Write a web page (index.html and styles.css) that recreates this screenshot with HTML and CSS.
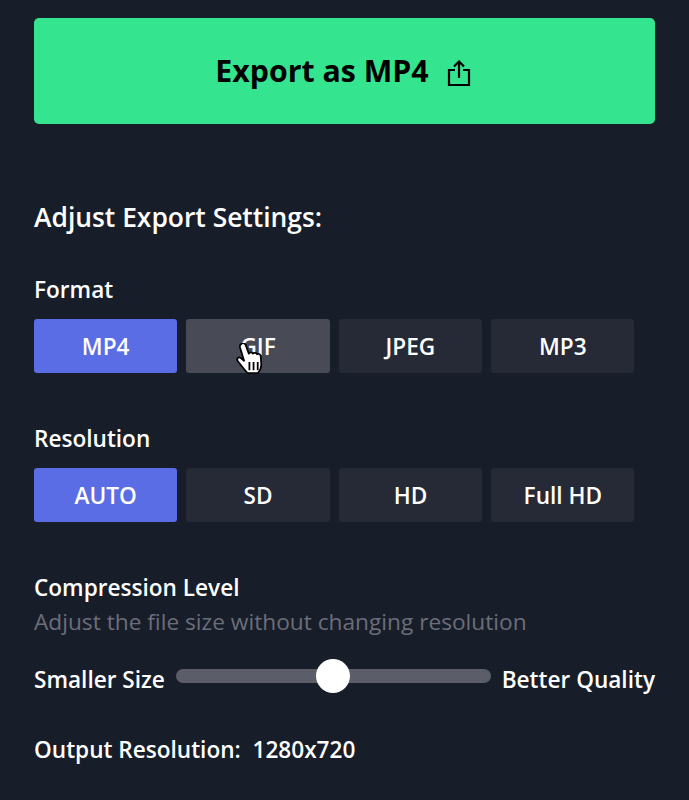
FILE: index.html
```html
<!DOCTYPE html>
<html lang="en">
<head>
    <meta charset="UTF-8">
    <title>Export Settings</title>
    <link rel="stylesheet" href="styles.css">
</head>
<body>
    <div class="panel">
        <button class="export-button">
            <span>Export as MP4</span>
            <svg class="share-icon" width="24" height="28" viewBox="0 0 24 28" fill="none" stroke="#000" stroke-width="2.200">
                <path d="M8 11H2v15h20V11h-6"/>
                <path d="M12 19V3"/>
                <path d="M7 7.500L12 2.500l5 5"/>
            </svg>
        </button>

        <h2 class="settings-title">Adjust Export Settings:</h2>

        <div class="group-label">Format</div>
        <div class="options">
            <div class="option active">MP4</div>
            <div class="option hovered">GIF
                <svg class="cursor" width="28" height="32" viewBox="2 2 22 27">
                    <path d="M6 2.500c1.500-1 3 0 3.500 1.500l2.500 7c.5-1.500 3-1.500 3.500 0 .5-1 3-1 3.500.5.800-.8 2.800-.3 3 1.500l.5 6c.2 4-1.500 7-3 8.500H11c-2-2-5-6-8.500-10.500-1-1.500.5-3.500 2.500-2.500l3 2.500L4.500 5.500C4.200 4.200 5 3 6 2.500z" fill="#fff" stroke="#000" stroke-width="1.500" stroke-linejoin="round"/>
                    <path d="M12.500 18v7M16 18v7M19.500 18v7" stroke="#000" stroke-width="1.500"/>
                </svg>
            </div>
            <div class="option">JPEG</div>
            <div class="option">MP3</div>
        </div>

        <div class="group-label">Resolution</div>
        <div class="options">
            <div class="option active">AUTO</div>
            <div class="option">SD</div>
            <div class="option">HD</div>
            <div class="option">Full HD</div>
        </div>

        <div class="group-label">Compression Level</div>
        <p class="hint">Adjust the file size without changing resolution</p>
        <div class="slider-row">
            <span>Smaller Size</span>
            <div class="slider">
                <div class="slider-thumb"></div>
            </div>
            <span>Better Quality</span>
        </div>

        <div class="output">Output Resolution:&nbsp; 1280x720</div>
    </div>
</body>
</html>
```

FILE: styles.css
```css
html, body {
    height: 100%;
}
body {
    font-family: 'Open Sans', sans-serif;
    background-color: #181d2a;
    color: #ffffff;
    margin: 0;
    overflow: hidden;
}
.panel {
    padding: 18px 34px 0;
}
.export-button {
    display: flex;
    align-items: center;
    justify-content: center;
    gap: 18px;
    width: 100%;
    height: 106px;
    background-color: #34e48e;
    color: #000000;
    font-family: inherit;
    font-size: 30.300px;
    font-weight: 700;
    border: none;
    border-radius: 5px;
    padding: 0 3px 2px 0;
}
.share-icon {
    margin-top: 6px;
}
.settings-title {
    font-size: 26.400px;
    font-weight: 600;
    line-height: 32px;
    margin: 77px 0 0;
}
.group-label {
    font-size: 22.600px;
    font-weight: 600;
    line-height: 30px;
    margin-top: 42px;
}
.options {
    display: flex;
    gap: 9.100px;
    margin-top: 14px;
    margin-bottom: 51px;
}
.options + .group-label {
    margin-top: 0;
}
.option {
    position: relative;
    display: flex;
    align-items: center;
    justify-content: center;
    width: 143.300px;
    height: 54px;
    background-color: #262a37;
    border-radius: 3px;
    font-size: 22.600px;
    font-weight: 600;
}
.option.active {
    background-color: #5a6de4;
}
.option.hovered {
    background-color: #484b55;
}
.cursor {
    position: absolute;
    left: 50px;
    top: 24px;
}
.hint {
    color: #6b6e79;
    font-size: 22.700px;
    line-height: 30px;
    margin: 4px 0 0;
}
.slider-row {
    display: flex;
    align-items: center;
    justify-content: space-between;
    font-size: 22.600px;
    font-weight: 600;
    margin-top: 27px;
    height: 30px;
}
.slider {
    position: relative;
    flex: 1;
    height: 14px;
    margin: -6px 11px 0;
    background-color: #5b5d69;
    border-radius: 7px;
}
.slider-thumb {
    position: absolute;
    left: 140px;
    top: -10px;
    width: 34px;
    height: 34px;
    background-color: #ffffff;
    border-radius: 50%;
}
.output {
    font-size: 22.600px;
    font-weight: 600;
    line-height: 30px;
    margin-top: 41px;
}
```
